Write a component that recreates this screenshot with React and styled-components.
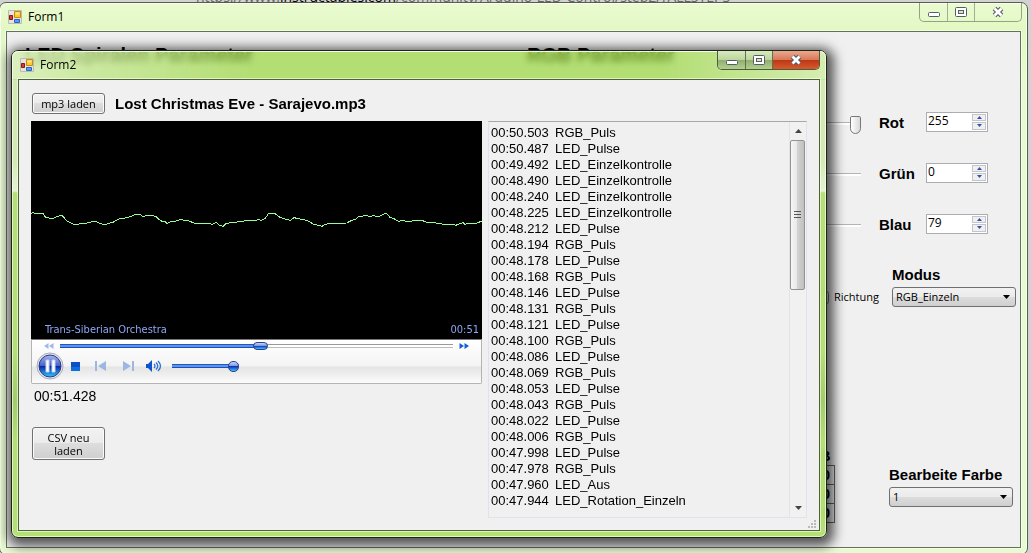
import React, { useState } from "react";
import styled, { createGlobalStyle, css } from "styled-components";

const GlobalStyle = createGlobalStyle`
  *, *::before, *::after { box-sizing: border-box; }
  body { margin: 0; background: #d2d2d4; color: #000; font-family: "Liberation Sans", Arial, sans-serif; }
  h1, h2, p, ul { margin: 0; padding: 0; }
  button, input, select { font: inherit; color: inherit; margin: 0; }
`;

const ui = `"Open Sans", "Segoe UI", sans-serif`;

/* ---------- Desktop ---------- */
const Desktop = styled.main`
  position: relative;
  min-height: 100vh;
  display: flex;
  flex-direction: column;
  padding-right: 3px;
  overflow: hidden;
`;
const Address = styled.div`
  height: 2px;
  display: flex;
  align-items: flex-end;
  padding-left: 196px;
  overflow: hidden;
  white-space: nowrap;
  color: #666;
  font: 14px/18px ${ui};
  span { margin-bottom: -4px; }
  b { font-weight: normal; color: #000; }
`;

/* ---------- Window chrome ---------- */
const Win = styled.section`
  display: flex;
  flex-direction: column;
  border: 1px solid ${(p) => (p.$active ? "#1c2610" : "#55604a")};
  border-radius: 7px;
  padding: 0 6px 6px;
  ${(p) =>
    p.$active
      ? css`
          position: absolute;
          z-index: 2;
          top: 50px;
          left: 11px;
          right: 204px;
          background: linear-gradient(to bottom, #99d63fb3 0, #99d63fb3 28px, #cfeaabe6 29px, #cfeaabe6 110px, #e3f3cee6 140px, #b0de6df2 142px, #b0de6df2 300px, #9cca62f2 350px, #b0de6df2 390px);
          backdrop-filter: blur(3px);
          box-shadow: inset 0 0 0 1px #ffffffa0, 2px 3px 12px 5px #000000a8;
        `
      : css`
          flex: 1;
          margin-left: -1px;
          background: linear-gradient(#eafbd0, #e2f8c3 26px, #e8fbd0 90px, #e8fbd0);
          box-shadow: inset 0 0 0 1px #f8ffec;
        `}
`;
const TitleBar = styled.header`
  display: flex;
  align-items: flex-start;
  height: 28px;
  padding-left: 2px;
  margin: 0 -1px 0 0;
  ${(p) =>
    p.$active &&
    css`
      margin: 0 -6px;
      padding: 0 6px 0 8px;
      border-radius: 6px 6px 0 0;
      box-shadow: inset 0 1px #ffffffa0;
      background: linear-gradient(to right, #ffffff88 0, #ffffff50 80px, #ffffff00 240px, #ffffff00 80%, #ffffff70);
    `}
`;
const Caption = styled.h1`
  flex: 1;
  display: flex;
  gap: 6px;
  align-items: center;
  height: 28px;
  font: 12px/28px ${ui};
`;
const Controls = styled.div`
  display: flex;
  height: 19px;
  border: 1px solid ${(p) => (p.$active ? "#4d5d3c" : "#93a383")};
  border-top: 0;
  border-radius: 0 0 5px 5px;
  overflow: hidden;
`;
const ControlButton = styled.button`
  width: ${(p) => (p.$close ? 47 : 27)}px;
  display: grid;
  place-items: center;
  padding: 0;
  border: 0;
  border-left: ${(p) => (p.$first ? 0 : 1)}px solid ${(p) => (p.$active ? "#5f7150" : "#a0af91")};
  background: ${(p) =>
    !p.$active
      ? "transparent"
      : p.$close
      ? "linear-gradient(#eba98f, #d9795a 48%, #bd3713 50%, #d65a2f)"
      : "linear-gradient(#d7ebbf, #bcd69c 48%, #90ad70 50%, #b2d08c)"};
`;
const Client = styled.div`
  flex: 1;
  background: #f0f0f0;
  border: 1px solid ${(p) => (p.$active ? "#4d6432" : "#65725a")};
  box-shadow: 0 0 0 1px #ffffff90;
`;

const FormIcon = () => (
  <svg width="14" height="14" viewBox="0 0 14 14" aria-hidden="true">
    <path d="M.5.5h13v13H.5z" fill="#e3e6df" stroke="#b8bdb2" />
    <path d="M6.500 1.500h6v6h-6z" fill="#ffc730" stroke="#c98a08" />
    <path d="M7.500 2.500h4v2h-4z" fill="#ffe58c" />
    <path d="M1.500 5.500h3v4h-3z" fill="#d63a32" stroke="#8f1712" />
    <path d="M6.500 9.500h5v3h-5z" fill="#5b9cf0" stroke="#2b63bd" />
  </svg>
);
const MinIcon = () => (
  <svg width="14" height="14" viewBox="0 0 14 14" aria-hidden="true">
    <rect x="1.500" y="7.500" width="11" height="4" rx="1" fill="#fff" stroke="#565b68" />
  </svg>
);
const MaxIcon = () => (
  <svg width="14" height="14" viewBox="0 0 14 14" aria-hidden="true">
    <rect x="1.500" y="2.500" width="11" height="9" rx="1" fill="#fff" stroke="#565b68" />
    <rect x="4.500" y="5.500" width="5" height="3" fill="#d6e6bf" stroke="#565b68" />
  </svg>
);
const CloseIcon = () => (
  <svg width="14" height="14" viewBox="0 0 14 14" aria-hidden="true">
    <path d="M3.500 3.500l7 7M10.500 3.500l-7 7" stroke="#565b68" strokeWidth="5" />
    <path d="M3.500 3.500l7 7M10.500 3.500l-7 7" stroke="#fff" strokeWidth="2.800" />
  </svg>
);

function Window({ title, active, children }) {
  return (
    <Win $active={active} aria-label={title}>
      <TitleBar $active={active}>
        <Caption>
          <FormIcon />
          {title}
        </Caption>
        <Controls $active={active}>
          <ControlButton $active={active} $first aria-label="Minimieren"><MinIcon /></ControlButton>
          <ControlButton $active={active} aria-label="Maximieren"><MaxIcon /></ControlButton>
          <ControlButton $active={active} $close aria-label="Schließen"><CloseIcon /></ControlButton>
        </Controls>
      </TitleBar>
      <Client $active={active}>{children}</Client>
    </Win>
  );
}

/* ---------- Form1 ---------- */
const Columns = styled.div`
  display: grid;
  grid-template-columns: 502px 1fr;
  padding: 11px 4px 0 18px;
`;
const Heading = styled.h2`
  height: 53px;
  font-size: 20px;
  line-height: 24px;
`;
const Label = styled.label`
  font-size: 15px;
  line-height: 18px;
  font-weight: bold;
`;
const ColorRow = styled.div`
  display: grid;
  grid-template-columns: 1fr 47px 62px;
  align-items: center;
  height: 51px;
  padding-right: 28px;
  ${Label} { padding-top: 2px; }
`;
const Slider = styled.input`
  appearance: none;
  min-width: 0;
  height: 22px;
  margin-right: 18px;
  padding-top: 6px;
  background: linear-gradient(#b4b4b4, #b4b4b4) 0 11px / 100% 1px no-repeat, linear-gradient(#fff, #fff) 0 12px / 100% 2px no-repeat;
  &::-webkit-slider-thumb {
    appearance: none;
    width: 11px;
    height: 18px;
    background: linear-gradient(to right, #fff, #d8d8d8);
    border: 1px solid #777;
    border-radius: 2px 2px 6px 6px;
  }
`;
const SpinBox = styled.div`
  display: flex;
  height: 20px;
  border: 1px solid #abadb3;
  background: #fff;
`;
const SpinInput = styled.input`
  flex: 1;
  min-width: 0;
  padding: 0 0 3px 1px;
  border: 0;
  background: none;
  font: 12px/15px ${ui};
`;
const SpinButtons = styled.div`
  width: 14px;
  margin: 1px;
  display: grid;
  grid-template-rows: 1fr 1fr;
  gap: 1px;
`;
const SpinButton = styled.button`
  display: grid;
  place-items: center;
  padding: 0;
  border: 1px solid #c3c5ca;
  background: #f0f0f0;
`;
const SelectBox = styled.select`
  appearance: none;
  width: 124px;
  height: 20px;
  padding: 0 20px 0 3px;
  border: 1px solid #707070;
  border-radius: 3px;
  background: url("data:image/svg+xml,%3Csvg xmlns='http://www.w3.org/2000/svg' width='8' height='4'%3E%3Cpath d='M0 0h7L3.500 4z'/%3E%3C/svg%3E") right 4px center no-repeat,
    linear-gradient(#f2f2f2, #ebebeb 49%, #dddddd 50%, #cfcfcf);
  font: 11px/18px ${ui};
`;
const Field = styled.div`
  display: flex;
  flex-direction: column;
  gap: 3px;
`;
const ModeRow = styled.div`
  display: flex;
  justify-content: flex-end;
  align-items: flex-end;
  gap: 13px;
  padding-top: 17px;
`;
const CheckLabel = styled.label`
  display: flex;
  align-items: center;
  gap: 5px;
  height: 20px;
  font: 11px/20px ${ui};
  input { width: 13px; height: 13px; }
`;
const FarbRow = styled.div`
  display: flex;
  justify-content: flex-end;
  align-items: flex-end;
  gap: 54px;
  padding: 140px 3px 24px 0;
`;
const FarbField = styled(Field)`
  padding-bottom: 16px;
`;
const ValueTable = styled.table`
  border-collapse: collapse;
  font-size: 15px;
  line-height: 18px;
  font-weight: bold;
  th { padding: 0 4px; }
  td { height: 19px; padding: 0 4px; border: 1px solid #666; text-align: right; }
`;

const Arrow = ({ down }) => (
  <svg width="5" height="3" viewBox="0 0 5 3" aria-hidden="true">
    <path d={down ? "M0 0h5L2.500 3z" : "M0 3h5L2.500 0z"} fill="#3550a4" />
  </svg>
);

function ColorControl({ name, initial }) {
  const [value, setValue] = useState(initial);
  const id = `farbe-${name}`;
  const clamp = (v) => Math.max(0, Math.min(255, Number(v) || 0));
  return (
    <ColorRow>
      <Slider type="range" min="0" max="255" value={value} aria-label={name} onChange={(e) => setValue(clamp(e.target.value))} />
      <Label htmlFor={id}>{name}</Label>
      <SpinBox>
        <SpinInput id={id} value={value} onChange={(e) => setValue(clamp(e.target.value))} />
        <SpinButtons>
          <SpinButton aria-label={`${name} erhöhen`} onClick={() => setValue(clamp(value + 1))}><Arrow /></SpinButton>
          <SpinButton aria-label={`${name} verringern`} onClick={() => setValue(clamp(value - 1))}><Arrow down /></SpinButton>
        </SpinButtons>
      </SpinBox>
    </ColorRow>
  );
}

function ParameterForm() {
  return (
    <Columns>
      <Heading>LED Spiralen Parameter</Heading>
      <div>
        <Heading>RGB Parameter</Heading>
        <ColorControl name="Rot" initial={255} />
        <ColorControl name="Grün" initial={0} />
        <ColorControl name="Blau" initial={79} />
        <ModeRow>
          <CheckLabel><input type="checkbox" />Richtung</CheckLabel>
          <Field>
            <Label htmlFor="modus">Modus</Label>
            <SelectBox id="modus"><option>RGB_Einzeln</option></SelectBox>
          </Field>
        </ModeRow>
        <FarbRow>
          <ValueTable>
            <thead><tr><th>B</th></tr></thead>
            <tbody>
              <tr><td>0</td></tr>
              <tr><td>0</td></tr>
              <tr><td>0</td></tr>
            </tbody>
          </ValueTable>
          <FarbField>
            <Label htmlFor="farbe">Bearbeite Farbe</Label>
            <SelectBox id="farbe"><option>1</option></SelectBox>
          </FarbField>
        </FarbRow>
      </div>
    </Columns>
  );
}

/* ---------- Form2 ---------- */
const PlayerLayout = styled.div`
  padding: 13px 12px 0;
`;
const FileRow = styled.div`
  display: flex;
  align-items: center;
  gap: 10px;
  height: 28px;
  padding: 0 0 7px 1px;
`;
const PushButton = styled.button`
  width: 73px;
  height: ${(p) => (p.$tall ? 33 : 21)}px;
  padding: 0;
  border: 1px solid #707070;
  border-radius: 3px;
  box-shadow: inset 0 0 0 1px #fbfbfb;
  background: linear-gradient(#f2f2f2, #ebebeb 49%, #dddddd 50%, #cfcfcf);
  font: 11px/13px ${ui};
`;
const FileName = styled.p`
  font-size: 15px;
  line-height: 18px;
  font-weight: bold;
`;
const Split = styled.div`
  display: grid;
  grid-template-columns: 451fr 319fr;
  gap: 6px;
`;
const Video = styled.div`
  display: flex;
  flex-direction: column;
  height: 218px;
  background: #000;
`;
const Wave = styled.svg`
  display: block;
  flex: none;
  width: 100%;
  height: 200px;
`;
const Track = styled.div`
  display: flex;
  justify-content: space-between;
  padding: 0 3px 0 14px;
  color: #8ea6f5;
  font: 11px/18px "DejaVu Sans Condensed", Tahoma, sans-serif;
`;
const Transport = styled.div`
  height: 45px;
  border: 1px solid #b4b4b4;
  border-top-color: #777;
  border-radius: 0 0 2px 2px;
  background: linear-gradient(#fff 0, #f4f4f4 26px, #e4e4e4 27px, #fbfbfb 43px);
`;
const SeekRow = styled.div`
  display: flex;
  align-items: center;
  gap: 5px;
  height: 12px;
  padding: 0 11px;
`;
const ButtonRow = styled.div`
  display: flex;
  align-items: center;
  height: 28px;
  padding-left: 4px;
`;
const MediaButton = styled.button`
  display: grid;
  place-items: center;
  width: ${(p) => p.$w || 26}px;
  height: 28px;
  padding: 0;
  border: 0;
  background: none;
`;
const SkipButton = styled(MediaButton)`
  width: 12px;
  height: 12px;
`;
const Range = styled.input.attrs({ type: "range" })`
  appearance: none;
  ${(p) => (p.$small ? "width: 67px; margin-left: 4px;" : "flex: 1; min-width: 0;")}
  height: 12px;
  background: linear-gradient(#2f51b8, #2f51b8) 0 4px / ${(p) => p.$fill} 1px no-repeat,
    linear-gradient(#4d9bf2, #4d9bf2) 0 5px / ${(p) => p.$fill} 2px no-repeat,
    linear-gradient(#2b49b4, #2b49b4) 0 7px / ${(p) => p.$fill} 1px no-repeat,
    linear-gradient(#999, #999) 0 4px / 100% 1px no-repeat,
    linear-gradient(#fff, #fff) 0 5px / 100% 2px no-repeat,
    linear-gradient(#bbb, #bbb) 0 7px / 100% 1px no-repeat;
  border-radius: 2px;
  &::-webkit-slider-thumb {
    appearance: none;
    width: ${(p) => (p.$small ? 11 : 15)}px;
    height: ${(p) => (p.$small ? 11 : 8)}px;
    border: 1px solid #2d4090;
    border-radius: 5px;
    background: linear-gradient(#c8d4fa, #8296e0 45%, #0b35b5 50%, #40c4fa);
  }
`;
const Clock = styled.p`
  padding: 3px 3px 5px;
  font-size: 14px;
  line-height: 18px;
`;
const CsvRow = styled.div`
  padding: 17px 1px 0;
`;
const LogBox = styled.div`
  display: flex;
  height: 397px;
  border: 1px solid #dfe3ee;
  border-top-color: #a5a7ab;
`;
const LogList = styled.ul`
  flex: 1;
  min-width: 0;
  padding: 3px 2px;
  list-style: none;
  overflow: hidden;
`;
const LogItem = styled.li`
  display: grid;
  grid-template-columns: 64px 1fr;
  font-size: 13px;
  line-height: 16px;
`;
const ScrollBar = styled.div`
  display: flex;
  flex-direction: column;
  width: 17px;
  border-left: 1px solid #e4e4e4;
  background: #f1f1f1;
`;
const ScrollArrow = styled.button`
  display: grid;
  place-items: center;
  height: 18px;
  padding: 0;
  border: 0;
  background: none;
`;
const ScrollTrack = styled.div`
  flex: 1;
`;
const ScrollThumb = styled.div`
  display: grid;
  place-items: center;
  width: 15px;
  height: 150px;
  border: 1px solid #939393;
  border-radius: 2px;
  background: linear-gradient(to right, #f6f6f6, #e8e8e8 49%, #d3d3d3 50%, #c0c0c0);
`;
const Grip = styled.svg`
  display: block;
  margin: 1px -11px 0 auto;
`;

const WAVE_POINTS =
  "0,277 6,274 12,277 36,277 39,283 45,289 57,292 66,292 72,289 81,286 93,283 99,289 105,298 117,304 132,312 147,308 162,309 172,304 195,301 204,306 223,312 232,307 245,305 257,297 267,293 289,290 315,280 327,280 337,288 347,283 363,283 375,287 384,295 393,301 402,302 408,308 423,300 435,300 447,296 471,299 492,307 537,308 543,311 555,304 567,314 577,316 585,308 603,304 633,302 647,298 667,299 682,296 692,298 703,292 712,278 732,278 747,289 762,294 779,298 789,290 807,294 822,297 835,301 847,310 857,312 873,316 882,310 897,307 947,306 962,298 972,296 982,287 1002,284 1017,286 1027,284 1042,287 1060,278 1067,278 1077,289 1089,293 1102,301 1117,298 1129,303 1142,300 1175,299 1187,304 1202,304 1232,309 1265,309 1274,313 1282,310 1296,305 1302,310 1312,307 1332,309 1342,304 1353,301";

const E = "LED_Einzelkontrolle";
const P = "LED_Pulse";
const R = "RGB_Puls";
const LOG = [
  ["00:50.503", R], ["00:50.487", P], ["00:49.492", E], ["00:48.490", E],
  ["00:48.240", E], ["00:48.225", E], ["00:48.212", P], ["00:48.194", R],
  ["00:48.178", P], ["00:48.168", R], ["00:48.146", P], ["00:48.131", R],
  ["00:48.121", P], ["00:48.100", R], ["00:48.086", P], ["00:48.069", R],
  ["00:48.053", P], ["00:48.043", R], ["00:48.022", P], ["00:48.006", R],
  ["00:47.998", P], ["00:47.978", R], ["00:47.960", "LED_Aus"], ["00:47.944", "LED_Rotation_Einzeln"],
];

const Skip = ({ back }) => (
  <svg width="10" height="6" viewBox="0 0 10 6" aria-hidden="true">
    <path d={back ? "M4.500 0v6L0 3zM9.500 0v6L5 3z" : "M.5 0v6L5 3zM5.500 0v6L10 3z"} fill={back ? "#9dbbe8" : "#0f62d6"} />
  </svg>
);
const PauseIcon = () => (
  <svg width="28" height="28" viewBox="0 0 28 28" aria-hidden="true">
    <defs>
      <linearGradient id="orb" x2="0" y2="1">
        <stop offset="0" stopColor="#a9b6ec" />
        <stop offset=".48" stopColor="#4763c9" />
        <stop offset=".52" stopColor="#0a2aa5" />
        <stop offset="1" stopColor="#35c5ff" />
      </linearGradient>
    </defs>
    <circle cx="14" cy="14" r="13" fill="#e8e8ee" stroke="#aaaab4" />
    <circle cx="14" cy="14" r="11" fill="url(#orb)" stroke="#26388e" />
    <path d="M10 8h3v12h-3zM16 8h3v12h-3z" fill="#fff" stroke="#c7d2f4" />
  </svg>
);
const StopIcon = () => (
  <svg width="9" height="9" viewBox="0 0 9 9" aria-hidden="true">
    <path d="M0 0h9v9H0z" fill="#0d4fc4" /><path d="M0 5h9v4H0z" fill="#0c70de" />
  </svg>
);
const TrackIcon = ({ back }) => (
  <svg width="12" height="10" viewBox="0 0 12 10" aria-hidden="true">
    <path d={back ? "M0 0h2v10H0zM11 0v10L3 5z" : "M10 0h2v10h-2zM1 0v10l8-5z"} fill="#9db6e2" />
  </svg>
);
const VolumeIcon = () => (
  <svg width="16" height="12" viewBox="0 0 16 12" aria-hidden="true">
    <path d="M0 4h2l4-4v12L2 8H0z" fill="#0c55cc" />
    <path d="M8 4q2 2 0 4M10 2.500q3.500 3.500 0 7M12 1q5 5 0 10" fill="none" stroke="#2e6fd8" strokeWidth="1.300" />
  </svg>
);
const ScrollGlyph = ({ down }) => (
  <svg width="7" height="4" viewBox="0 0 7 4" aria-hidden="true">
    <path d={down ? "M0 0h7L3.500 4z" : "M0 4h7L3.500 0z"} fill="#444" />
  </svg>
);

function PlayerForm() {
  const [position, setPosition] = useState(51);
  const [volume, setVolume] = useState(100);
  return (
    <PlayerLayout>
      <FileRow>
        <PushButton>mp3 laden</PushButton>
        <FileName>Lost Christmas Eve - Sarajevo.mp3</FileName>
      </FileRow>
      <Split>
        <div>
          <Video>
            <Wave viewBox="0 0 1353 600" preserveAspectRatio="none" aria-hidden="true">
              <polyline points={WAVE_POINTS} fill="none" stroke="#98fb98" vectorEffect="non-scaling-stroke" shapeRendering="crispEdges" />
            </Wave>
            <Track><span>Trans-Siberian Orchestra</span><span>00:51</span></Track>
          </Video>
          <Transport>
            <SeekRow>
              <SkipButton aria-label="Zurückspulen"><Skip back /></SkipButton>
              <Range aria-label="Position" $fill="50%" value={position} onChange={(e) => setPosition(e.target.value)} />
              <SkipButton aria-label="Vorspulen"><Skip /></SkipButton>
            </SeekRow>
            <ButtonRow>
              <MediaButton $w={28} aria-label="Pause"><PauseIcon /></MediaButton>
              <MediaButton $w={22} aria-label="Stopp"><StopIcon /></MediaButton>
              <MediaButton $w={30} aria-label="Vorheriger Titel"><TrackIcon back /></MediaButton>
              <MediaButton $w={24} aria-label="Nächster Titel"><TrackIcon /></MediaButton>
              <MediaButton $w={28} aria-label="Ton"><VolumeIcon /></MediaButton>
              <Range $small aria-label="Lautstärke" $fill="90%" value={volume} onChange={(e) => setVolume(e.target.value)} />
            </ButtonRow>
          </Transport>
          <Clock>00:51.428</Clock>
          <CsvRow><PushButton $tall>CSV neu<br />laden</PushButton></CsvRow>
        </div>
        <LogBox>
          <LogList>
            {LOG.map(([time, name]) => (
              <LogItem key={time}><span>{time}</span><span>{name}</span></LogItem>
            ))}
          </LogList>
          <ScrollBar>
            <ScrollArrow aria-label="Nach oben"><ScrollGlyph /></ScrollArrow>
            <ScrollTrack>
              <ScrollThumb>
                <svg width="7" height="8" viewBox="0 0 7 8" aria-hidden="true">
                  <path d="M0 .5h7M0 3.500h7M0 6.500h7" stroke="#555" />
                </svg>
              </ScrollThumb>
            </ScrollTrack>
            <ScrollArrow aria-label="Nach unten"><ScrollGlyph down /></ScrollArrow>
          </ScrollBar>
        </LogBox>
      </Split>
      <Grip width="11" height="11" viewBox="0 0 11 11" aria-hidden="true">
        <path d="M7 1h2v2H7zM4 4h2v2H4zM7 4h2v2H7zM1 7h2v2H1zM4 7h2v2H4zM7 7h2v2H7z" fill="#bbb" />
      </Grip>
    </PlayerLayout>
  );
}

export default function App() {
  return (
    <>
      <GlobalStyle />
      <Desktop>
        <Address><span>https://www.<b>instructables.com</b>/community/Arduino-LED-Control/step2/?ALLSTEPS</span></Address>
        <Window title="Form1"><ParameterForm /></Window>
        <Window title="Form2" active><PlayerForm /></Window>
      </Desktop>
    </>
  );
}
